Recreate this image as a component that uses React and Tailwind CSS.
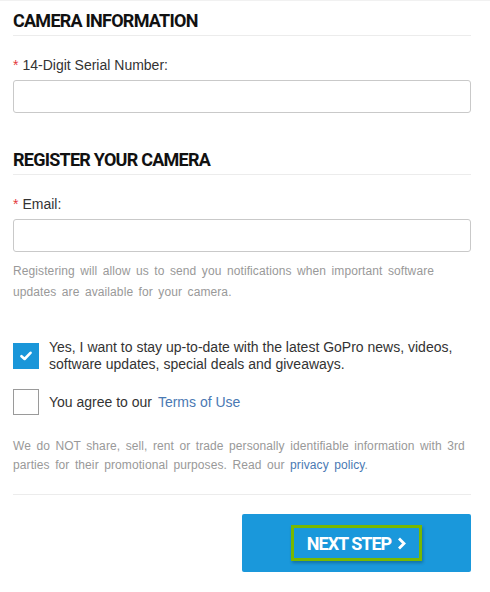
import React, { useState } from 'react';

const SANS = { fontFamily: '"Liberation Sans", Arial, sans-serif' };

function SectionTitle({ children }) {
  return (
    <div className="border-b border-[#ececec] pb-[4px]">
      <h2 className="text-[18px] leading-[20px] font-bold text-[#111] tracking-[-0.75px]" style={{ fontFamily: 'Roboto, sans-serif' }}>
        {children}
      </h2>
    </div>
  );
}

function Field({ label }) {
  return (
    <div>
      <label className="block text-[14px] leading-[18px] text-[#333] mb-[6px]">
        <span className="text-[#e4393c] mr-[4px]">*</span>{label}
      </label>
      <input className="block w-full h-[33px] rounded-[3px] border border-[#c9c9c9] bg-white outline-none px-2" />
    </div>
  );
}

function Checkbox({ checked, onClick }) {
  if (checked) {
    return (
      <button onClick={onClick} className="w-[26px] h-[26px] shrink-0 bg-[#1a96d9] flex items-center justify-center">
        <svg width="12" height="10" viewBox="0 0 12 10">
          <path d="M1.5 5.2 L4.6 8 L10.5 1.8" fill="none" stroke="white" strokeWidth="2.6" strokeLinecap="round" strokeLinejoin="round" />
        </svg>
      </button>
    );
  }
  return <button onClick={onClick} className="w-[26px] h-[26px] shrink-0 border border-[#9a9a9a] bg-white" />;
}

export default function App() {
  const [news, setNews] = useState(true);
  const [terms, setTerms] = useState(false);

  return (
    <div className="w-[490px] h-[592px] bg-white border-t border-[#f1f1f1]" style={SANS}>
      <div className="pl-[13px] pr-[19px] pt-[10px]">
        <SectionTitle>CAMERA INFORMATION</SectionTitle>

        <div className="mt-[20px]">
          <Field label="14-Digit Serial Number:" />
        </div>

        <div className="mt-[37px]">
          <SectionTitle>REGISTER YOUR CAMERA</SectionTitle>
        </div>

        <div className="mt-[20px]">
          <Field label="Email:" />
        </div>

        <p className="mt-[9px] text-[12px] leading-[21px] text-[#999] tracking-[0.1px] [word-spacing:2px]">
          Registering will allow us to send you notifications when important software<br />
          updates are available for your camera.
        </p>

        <div className="mt-[40px] flex items-start gap-[10px]">
          <Checkbox checked={news} onClick={() => setNews(!news)} />
          <p className="text-[14px] leading-[17px] text-[#333] -mt-[4px]">
            Yes, I want to stay up-to-date with the latest GoPro news, videos,<br />
            software updates, special deals and giveaways.
          </p>
        </div>

        <div className="mt-[16px] flex items-center gap-[10px]">
          <Checkbox checked={terms} onClick={() => setTerms(!terms)} />
          <p className="text-[14px] leading-[18px] text-[#333]">
            You agree to our <a href="#" className="ml-[2px] text-[#4a79b3]">Terms of Use</a>
          </p>
        </div>

        <p className="mt-[22px] text-[12px] leading-[19px] text-[#999] tracking-[0.1px] [word-spacing:2px]">
          We do NOT share, sell, rent or trade personally identifiable information with 3rd<br />
          parties for their promotional purposes. Read our <a href="#" className="text-[#4a79b3]">privacy policy</a>.
        </p>

        <div className="mt-[19px] border-t border-[#ececec]" />

        <div className="mt-[19px] flex justify-end">
          <button className="w-[229px] h-[58px] rounded-[2px] bg-[#1a98db] flex items-center justify-center">
            <span
              className="flex items-center gap-[4px] border-[3px] border-[#78b800] px-[13px] h-[36px] text-white text-[18px] font-bold tracking-[-1px] shadow-[1px_2px_3px_rgba(0,0,0,0.25)]"
              style={{ fontFamily: 'Roboto, sans-serif' }}
            >
              NEXT STEP
              <svg width="9" height="13" viewBox="0 0 9 13" className="ml-[2px]">
                <path d="M2 1.5 L7 6.5 L2 11.5" fill="none" stroke="white" strokeWidth="2.8" />
              </svg>
            </span>
          </button>
        </div>
      </div>
    </div>
  );
}
